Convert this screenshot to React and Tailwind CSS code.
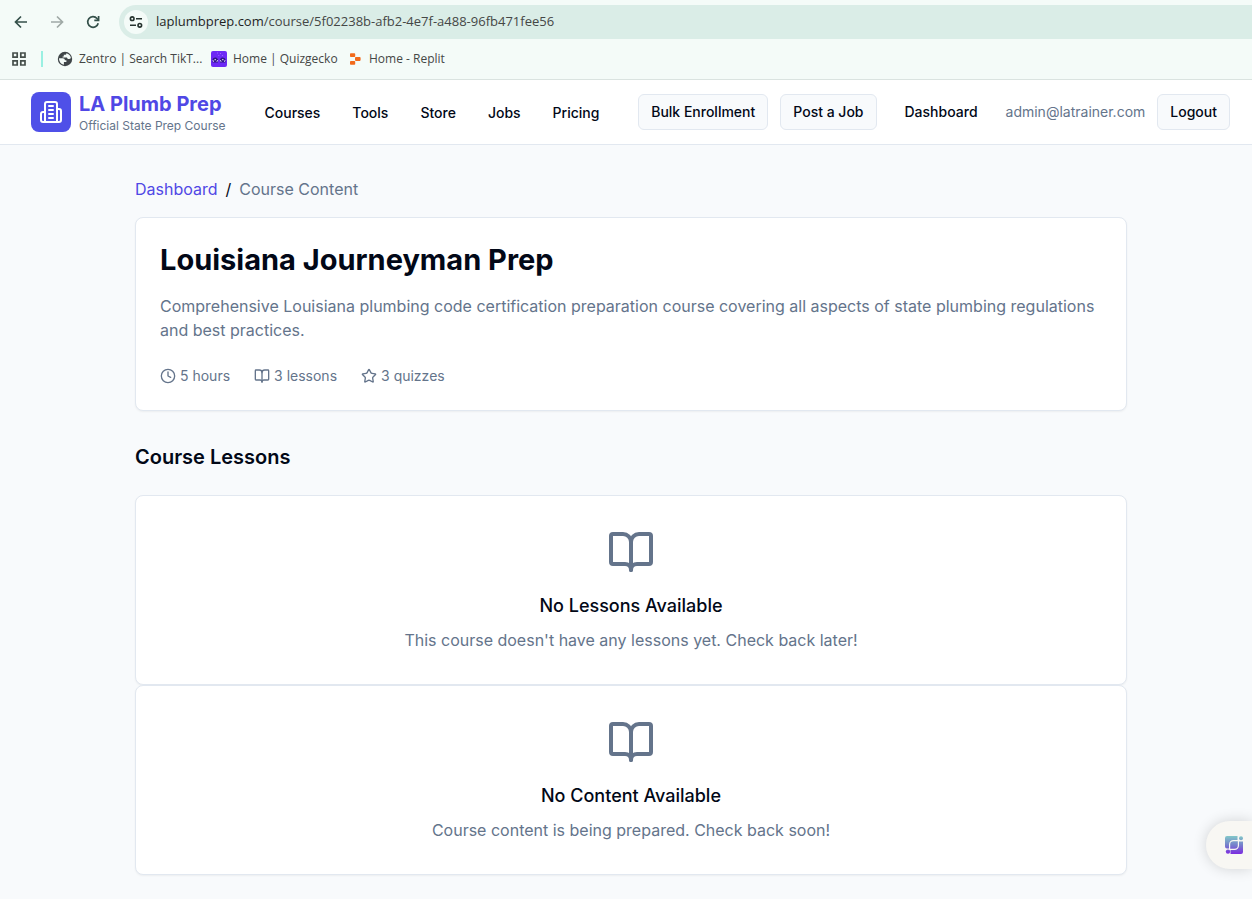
import { BookOpen, Clock, Star } from "lucide-react";

const inter = "font-[Inter,sans-serif]";
const ui = "font-['Open_Sans','Noto_Sans',sans-serif]";

function BackIcon() {
  return (
    <svg className="size-4" viewBox="0 0 16 16" fill="none" stroke="#34504a" strokeWidth="1.7" aria-hidden="true">
      <path d="M14 8H3M8 2.5 2.5 8 8 13.5" />
    </svg>
  );
}

function ForwardIcon() {
  return (
    <svg className="size-4" viewBox="0 0 16 16" fill="none" stroke="#9fa9a6" strokeWidth="1.7" aria-hidden="true">
      <path d="M2 8h11M8 2.5 13.5 8 8 13.5" />
    </svg>
  );
}

function ReloadIcon() {
  return (
    <svg className="size-4" viewBox="0 0 16 16" fill="none" stroke="#34504a" strokeWidth="1.7" aria-hidden="true">
      <path d="M13.2 9.2A5.3 5.3 0 1 1 12 4.5l1.2 1.2" />
      <path d="M13.6 2v4.3H9.3" />
    </svg>
  );
}

function TuneIcon() {
  return (
    <svg className="size-4" viewBox="0 0 16 16" fill="none" stroke="#26332f" strokeWidth="1.6" aria-hidden="true">
      <circle cx="4.2" cy="4.7" r="1.8" />
      <path d="M8 4.7h6M2 11.3h6" />
      <circle cx="11.8" cy="11.3" r="1.8" />
    </svg>
  );
}

function AppsIcon() {
  return (
    <svg className="size-4" viewBox="0 0 16 16" fill="none" stroke="#454f4b" strokeWidth="1.7" aria-hidden="true">
      <path d="M2 2h4.2v4.2H2zM9.8 2H14v4.2H9.8zM2 9.8h4.2V14H2zM9.8 9.8H14V14H9.8z" />
    </svg>
  );
}

function GlobeIcon() {
  return (
    <svg className="size-4" viewBox="0 0 16 16" aria-hidden="true">
      <circle cx="8" cy="8" r="7.2" fill="#3f4548" />
      <path d="M2 7.2h3.7c1.5 0 2.2.9 2.2 2.1h1.5v1.6H6.9v2.8A6 6 0 0 1 2 7.2Z" fill="#f4fbf8" />
      <path d="M9.4 2.2c0 1-.6 1.6-1.5 1.6H6.8v1.6H5.6v1.1h3.7c.9 0 1.3.6 1.3 1.4h1.8c.8 0 1.3-.3 1.5-.8A6 6 0 0 0 9.4 2.2Z" fill="#f4fbf8" />
    </svg>
  );
}

function GeckoIcon() {
  return (
    <svg className="size-4" viewBox="0 0 16 16" aria-hidden="true">
      <rect width="16" height="16" rx="2" fill="#6d28f5" />
      <path d="M6 1.500h1v1H6zM9 2h1v1H9zM7.300 4h1v1h-1zM11 4h1v1h-1z" fill="#9a62ff" />
      <path d="M1.500 8.500C2 6 6 5.500 7 8.500v3H1.500zM9 8.500c.8-3 5-2.500 5.500 0v3H9z" fill="#32148a" />
      <path d="M2 9a2 2 0 0 0 1 2M6.500 9a2 2 0 0 1-1 2M9.500 9a2 2 0 0 0 1 2M14 9a2 2 0 0 1-1 2" fill="none" stroke="#c9b8f2" strokeWidth="1" />
      <path d="M3.600 8h1.200v1.200H3.600zM11.200 8h1.200v1.200h-1.200z" fill="#e8defc" />
    </svg>
  );
}

function ReplitIcon() {
  return (
    <svg className="size-4" viewBox="0 0 16 16" fill="#f26a1b" aria-hidden="true">
      <rect x="3" y="2.3" width="5.2" height="3.8" rx=".8" />
      <rect x="8" y="6.1" width="5.6" height="3.8" rx=".8" />
      <rect x="3" y="9.9" width="5.2" height="3.8" rx=".8" />
    </svg>
  );
}

function AssistantIcon() {
  return (
    <svg className="size-[18px]" viewBox="0 0 18 18" aria-hidden="true">
      <defs>
        <linearGradient id="assist" x1="0" y1="0" x2="0" y2="18" gradientUnits="userSpaceOnUse">
          <stop offset="0" stopColor="#82c8c8" />
          <stop offset=".5" stopColor="#7680cc" />
          <stop offset="1" stopColor="#7c2be0" />
        </linearGradient>
      </defs>
      <path fill="url(#assist)" d="M2 0H12.500v4H8.500a4.500 4.500 0 0 0-4.500 4.500V12.500H2a2 2 0 0 1-2-2V2A2 2 0 0 1 2 0Z" />
      <path fill="url(#assist)" d="M14 5.500h4V16a2 2 0 0 1-2 2H5.500v-4h4A4.500 4.500 0 0 0 14 9.500Z" />
      <path fill="url(#assist)" d="M8.500 5.200h4.300V9.500a3.300 3.300 0 0 1-3.300 3.300H5.200V8.500a3.300 3.300 0 0 1 3.300-3.300Z" />
      <circle cx="16" cy="2.200" r="2" fill="url(#assist)" />
      <circle cx="3" cy="15.600" r="2.200" fill="url(#assist)" />
    </svg>
  );
}

function BuildingIcon() {
  return (
    <svg className="size-6" viewBox="0 0 24 24" fill="none" stroke="currentColor" strokeWidth="2" strokeLinecap="round" strokeLinejoin="round" aria-hidden="true">
      <path d="M6 22V4a2 2 0 0 1 2-2h8a2 2 0 0 1 2 2v18Z" />
      <path d="M6 12H4a2 2 0 0 0-2 2v6a2 2 0 0 0 2 2h2" />
      <path d="M18 9h2a2 2 0 0 1 2 2v9a2 2 0 0 1-2 2h-2" />
      <path d="M10 6h4M10 10h4M10 14h4M10 18h4" />
    </svg>
  );
}

function BrowserBar() {
  return (
    <div className={`border-b border-[#dae3e0] bg-[#f4fbf8] text-[#454746] ${ui}`}>
      <div className="flex items-center pt-[5px] pl-[13px]">
        <div className="flex w-[106px] shrink-0 items-center gap-5">
          <button aria-label="Back"><BackIcon /></button>
          <button aria-label="Forward"><ForwardIcon /></button>
          <button aria-label="Reload"><ReloadIcon /></button>
        </div>
        <div className="flex h-[34px] flex-1 items-center gap-2 rounded-l-full bg-[#daede7] pl-[5px]">
          <button aria-label="Site information" className="flex size-6 items-center justify-center rounded-full bg-[#f4fbf8]">
            <TuneIcon />
          </button>
          <div className="text-[13px]">
            <span className="text-[#1f1f1f]">laplumbprep.com</span>/course/5f02238b-afb2-4e7f-a488-96fb471fee56
          </div>
        </div>
      </div>
      <nav aria-label="Bookmarks" className="flex h-10 items-center pl-[11px] text-xs">
        <button aria-label="Apps"><AppsIcon /></button>
        <span className="mr-[14px] ml-[14px] h-4 w-[2px] bg-[#9af0e2]" />
        <a href="#zentro" className="flex w-[154px] items-center gap-[6px] whitespace-nowrap"><GlobeIcon />Zentro | Search TikT...</a>
        <a href="#quizgecko" className="flex w-[136px] items-center gap-[6px] whitespace-nowrap"><GeckoIcon />Home | Quizgecko</a>
        <a href="#replit" className="flex items-center gap-[6px] whitespace-nowrap"><ReplitIcon />Home - Replit</a>
      </nav>
    </div>
  );
}

function OutlineButton({ children }) {
  return (
    <button className="h-9 rounded-md border border-[#e2e8f0] bg-[#f8fafc] px-3 whitespace-nowrap">{children}</button>
  );
}

function SiteHeader() {
  return (
    <header className="flex h-[65px] items-center justify-between border-b border-[#e2e8f0] bg-white pr-[22px] pl-[31px] text-sm font-medium">
      <div className="flex items-center">
        <a href="#home" className="flex items-center gap-2">
          <span className="flex size-10 items-center justify-center rounded-lg bg-[#4f50e8] text-white">
            <BuildingIcon />
          </span>
          <span className="flex flex-col pt-1 whitespace-nowrap">
            <span className="text-xl leading-6 font-bold text-[#5048e5]">LA Plumb Prep</span>
            <span className="text-xs leading-5 font-normal text-[#64748b]">Official State Prep Course</span>
          </span>
        </a>
        <nav aria-label="Main" className="ml-[39px] flex gap-8 pt-[2px]">
          {["Courses", "Tools", "Store", "Jobs", "Pricing"].map((name) => (
            <a key={name} href={`#${name.toLowerCase()}`}>{name}</a>
          ))}
        </nav>
      </div>
      <div className="flex items-center gap-3">
        <OutlineButton>Bulk Enrollment</OutlineButton>
        <OutlineButton>Post a Job</OutlineButton>
        <a href="#dashboard" className="px-4">Dashboard</a>
        <span className="font-normal text-[#64748b]">admin@latrainer.com</span>
        <OutlineButton>Logout</OutlineButton>
      </div>
    </header>
  );
}

function Stat({ icon: Icon, children }) {
  return (
    <span className="flex items-center gap-1"><Icon className="size-4" />{children}</span>
  );
}

function EmptyCard({ title, text }) {
  return (
    <section className="flex flex-col items-center rounded-lg border border-[#e2e8f0] bg-white p-8 text-center shadow-xs">
      <BookOpen className="mb-4 size-12 text-[#64748b]" />
      <h3 className="mb-2 text-lg leading-7 font-medium">{title}</h3>
      <p className="text-[#64748b]">{text}</p>
    </section>
  );
}

export default function App() {
  return (
    <div className={`min-h-screen bg-[#f8fafc] text-[#020817] ${inter}`}>
      <BrowserBar />
      <SiteHeader />
      <main className="pl-[10px]">
        <div className="mx-auto max-w-5xl px-4 pt-8 pb-6">
          <nav aria-label="Breadcrumb" className="mb-4 flex gap-2">
            <a href="#dashboard" className="text-[#5048e5]">Dashboard</a>
            <span>/</span>
            <span className="text-[#64748b]">Course Content</span>
          </nav>
          <section className="rounded-lg border border-[#e2e8f0] bg-white p-6 shadow-xs">
            <h1 className="mb-4 text-[29px] leading-9 font-bold">Louisiana Journeyman Prep</h1>
            <p className="mb-6 text-[#64748b]">
              Comprehensive Louisiana plumbing code certification preparation course covering all aspects of state plumbing regulations and best practices.
            </p>
            <div className="flex gap-6 text-sm text-[#64748b]">
              <Stat icon={Clock}>5 hours</Stat>
              <Stat icon={BookOpen}>3 lessons</Stat>
              <Stat icon={Star}>3 quizzes</Stat>
            </div>
          </section>
          <h2 className="mt-8 mb-6 text-xl font-semibold">Course Lessons</h2>
          <EmptyCard title="No Lessons Available" text="This course doesn't have any lessons yet. Check back later!" />
          <EmptyCard title="No Content Available" text="Course content is being prepared. Check back soon!" />
        </div>
      </main>
      <button aria-label="Open assistant" className="fixed right-0 bottom-[30px] flex h-12 w-[46px] items-center rounded-l-full bg-[#f8f7f3] pl-[19px] shadow-[0_0_14px_rgba(0,0,0,0.16)]">
        <AssistantIcon />
      </button>
    </div>
  );
}
